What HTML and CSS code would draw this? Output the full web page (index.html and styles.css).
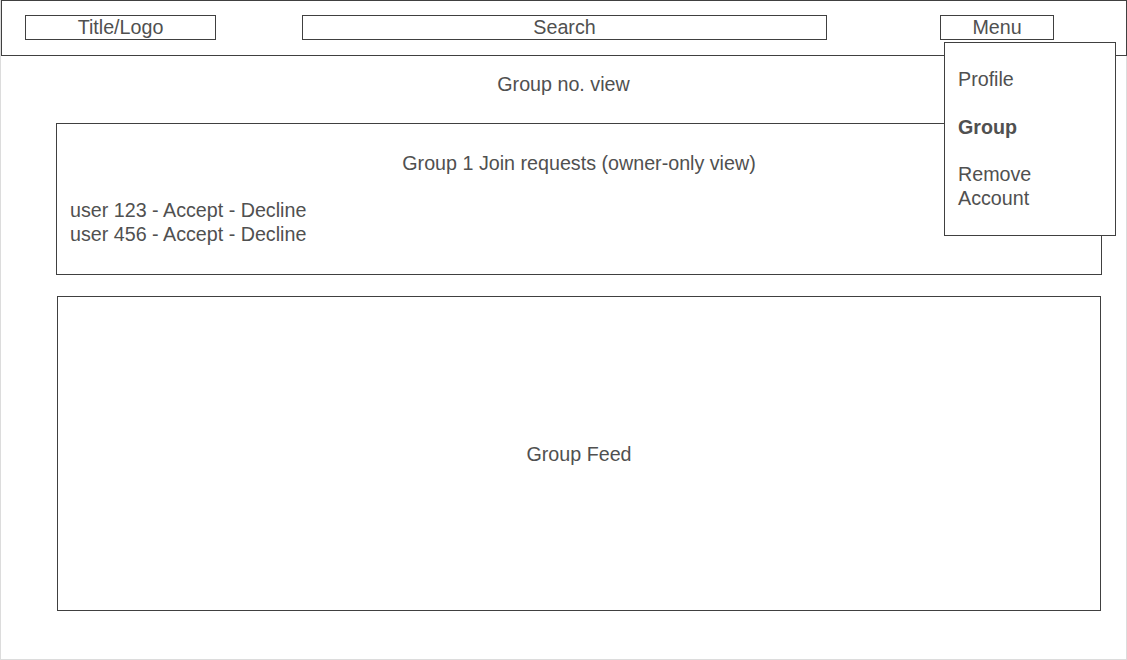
FILE: index.html
```html
<!DOCTYPE html>
<html>
<head>
<meta charset="utf-8">
<link rel="stylesheet" href="styles.css">
</head>
<body>
<div class="frame">
  <header class="header">
    <div class="hbox title">Title/Logo</div>
    <div class="hbox search">Search</div>
    <div class="hbox menu">Menu</div>
  </header>
  <div class="dropdown">
    <div class="item">Profile</div>
    <div class="item active">Group</div>
    <div class="item">Remove<br>Account</div>
  </div>
  <div class="page-title">Group no. view</div>
  <section class="requests">
    <div class="requests-title">Group 1 Join requests (owner-only view)</div>
    <div class="request-list">
      <div>user 123 - Accept - Decline</div>
      <div>user 456 - Accept - Decline</div>
    </div>
  </section>
  <section class="feed">Group Feed</section>
</div>
</body>
</html>
```

FILE: styles.css
```css
* { box-sizing: border-box; }
html, body { margin: 0; padding: 0; background: #fff; }
body {
  font-family: "Liberation Sans", Arial, sans-serif;
  font-size: 19.7px;
  line-height: 24px;
  color: #505050;
}
.frame {
  position: relative;
  width: 1127px;
  height: 660px;
  border: 1px solid #dcdcdc;
  border-top: none;
  display: flex;
  flex-direction: column;
}
.header {
  height: 56px;
  margin-right: -1px;
  border: 1px solid #404040;
  display: flex;
  align-items: flex-start;
  padding: 14px 0 0 23px;
}
.hbox {
  height: 25px;
  border: 1px solid #404040;
  text-align: center;
  line-height: 22px;
}
.title { width: 191px; }
.search { width: 525px; margin-left: 86px; }
.menu { width: 114px; margin-left: 113px; }
.dropdown {
  position: absolute;
  left: 943px;
  top: 42px;
  width: 172px;
  height: 194px;
  background: #fff;
  border: 1px solid #404040;
  padding: 24px 0 0 13px;
  display: flex;
  flex-direction: column;
  gap: 24px;
}
.item { line-height: 24px; }
.item.active { font-weight: bold; }
.item:last-child { margin-top: -1px; }
.page-title {
  margin-top: 16px;
  text-align: center;
}
.requests {
  margin: 27px 24px 0 55px;
  height: 152px;
  border: 1px solid #404040;
  padding: 27px 0 0 13px;
}
.requests-title {
  text-align: center;
  padding-right: 13px;
}
.request-list { margin-top: 23px; }
.feed {
  margin: 21px 25px 0 56px;
  height: 315px;
  border: 1px solid #404040;
  display: flex;
  align-items: center;
  justify-content: center;
}
```
